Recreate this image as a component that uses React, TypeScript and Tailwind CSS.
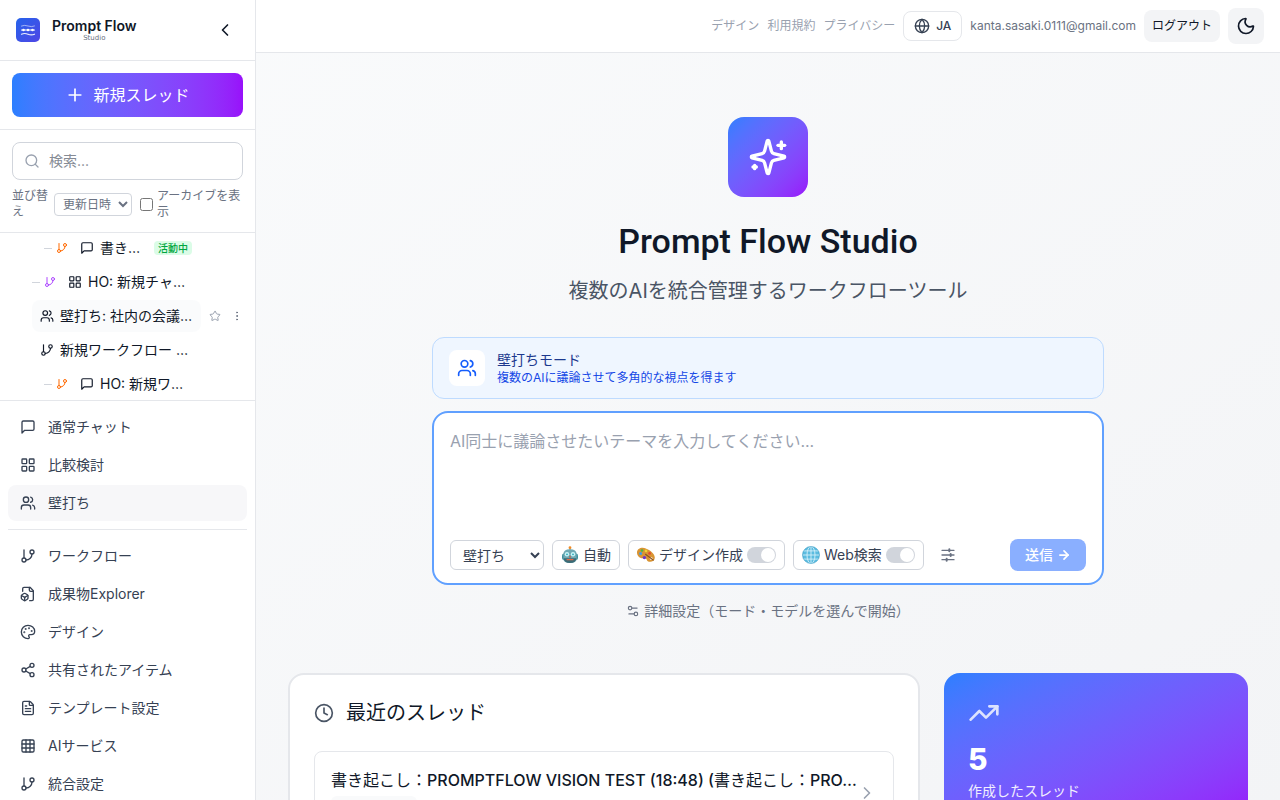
import React from 'react';
import {
  ArrowRight,
  ChevronLeft,
  ChevronRight,
  Clock,
  FileText,
  GitBranch,
  Globe,
  Grid3x3,
  LayoutGrid,
  Moon,
  MoreVertical,
  Palette,
  Plus,
  Search,
  Settings2,
  Share2,
  Star,
  TrendingUp,
  Users,
} from 'lucide-react';

type IconProps = { className?: string };
type IconType = React.ComponentType<IconProps>;

function Stroke({ className, children }: IconProps & { children: React.ReactNode }) {
  return (
    <svg
      viewBox="0 0 24 24"
      fill="none"
      stroke="currentColor"
      strokeWidth="2"
      strokeLinecap="round"
      strokeLinejoin="round"
      className={className}
      aria-hidden="true"
    >
      {children}
    </svg>
  );
}

function ChatIcon({ className }: IconProps) {
  return (
    <Stroke className={className}>
      <path d="M21 15a2 2 0 0 1-2 2H7l-4 4V5a2 2 0 0 1 2-2h14a2 2 0 0 1 2 2z" />
    </Stroke>
  );
}

function SlidersIcon({ className }: IconProps) {
  return (
    <Stroke className={className}>
      <path d="M3 5h18M3 12h18M3 19h18" />
      <path d="M14 3.500v3M16 10.500v3M10 17.500v3" strokeWidth="3" />
    </Stroke>
  );
}

function FileBoxIcon({ className }: IconProps) {
  return (
    <Stroke className={className}>
      <path d="M14.5 22H18a2 2 0 0 0 2-2V7l-5-5H6a2 2 0 0 0-2 2v4" />
      <path d="M14 2v4a2 2 0 0 0 2 2h4" />
      <path d="M3 13.1a2 2 0 0 0-1 1.76v3.24a2 2 0 0 0 .97 1.78L6 21.7a2 2 0 0 0 2.03.01L11 19.9a2 2 0 0 0 1-1.76V14.9a2 2 0 0 0-.97-1.78L8 11.3a2 2 0 0 0-2.03-.01Z" />
      <path d="M7 17v5" />
      <path d="M11.7 14.2 7 17l-4.7-2.8" />
    </Stroke>
  );
}

function SparklesIcon({ className }: IconProps) {
  return (
    <Stroke className={className}>
      <path d="M9.937 15.5A2 2 0 0 0 8.5 14.063l-6.135-1.582a.5.5 0 0 1 0-.962L8.5 9.936A2 2 0 0 0 9.937 8.5l1.582-6.135a.5.5 0 0 1 .963 0L14.063 8.5A2 2 0 0 0 15.5 9.937l6.135 1.581a.5.5 0 0 1 0 .964L15.5 14.063a2 2 0 0 0-1.437 1.437l-1.582 6.135a.5.5 0 0 1-.963 0z" />
      <path d="M20 3v4" />
      <path d="M22 5h-4" />
      <path d="M4 17v2" />
      <path d="M5 18H3" />
    </Stroke>
  );
}

function LogoMark() {
  return (
    <svg viewBox="0 0 24 24" className="size-6 shrink-0" aria-hidden="true">
      <defs>
        <linearGradient id="logo" x1="0" y1="0" x2="1" y2="1">
          <stop offset="0" stopColor="#2563eb" />
          <stop offset="1" stopColor="#4f46e5" />
        </linearGradient>
      </defs>
      <rect width="24" height="24" rx="5" fill="url(#logo)" />
      <g fill="none" stroke="#fff" strokeLinecap="round">
        <path d="M5.500 8q3-1.300 6.500 0t6.500 0" strokeWidth="1" opacity=".55" />
        <path d="M5.500 12h13" strokeWidth="1.200" />
        <path d="M5.500 16.200q3-1.400 6.500 0t6.500 0" strokeWidth="1.200" opacity=".9" />
      </g>
      <g fill="#fff">
        <circle cx="7.500" cy="12" r="1.300" />
        <circle cx="12" cy="12" r="1.300" />
        <circle cx="16.500" cy="12" r="1.300" />
      </g>
    </svg>
  );
}

function RobotEmoji() {
  return (
    <svg viewBox="0 0 18 18" className="size-[18px] shrink-0" aria-hidden="true">
      <path d="M9 2.500v3" stroke="#8a9296" strokeWidth="1.200" />
      <circle cx="9" cy="1.700" r="1.400" fill="#f08a24" />
      <rect x="1" y="7.500" width="16" height="6.500" rx="2" fill="#3f8f9c" />
      <path d="M2.400 8q0-4.800 6.600-4.800t6.600 4.800v5q0 4-6.600 4t-6.600-4z" fill="#6fa9b4" />
      <path d="M2.600 12.200h12.800q-.3 4.800-6.400 4.800t-6.400-4.800z" fill="#3b6b76" />
      <circle cx="6" cy="8.300" r="2.200" fill="#c9f4f7" />
      <circle cx="12" cy="8.300" r="2.200" fill="#c9f4f7" />
      <circle cx="6" cy="8.300" r=".9" fill="#2aa6b8" />
      <circle cx="12" cy="8.300" r=".9" fill="#2aa6b8" />
      <path d="m9 9.500 1 1.900H8z" fill="#d9482b" />
      <path d="M5.600 13.600h6.800" stroke="#e06a4a" strokeWidth="1.300" />
    </svg>
  );
}

function PaletteEmoji() {
  return (
    <svg viewBox="0 0 18 18" className="size-[18px] shrink-0" aria-hidden="true">
      <path
        d="M0 6.500C.2 2.500 4.500.9 8.800 2.400s9 5.200 9 9.300c0 3.500-3.900 4.900-6.700 3.700-1.600-.7-.9-2.400-2.600-3.200-1.800-.8-2.600.6-4.700-.2C1.300 11.100-.1 8.900 0 6.500z"
        fill="#d99432"
      />
      <circle cx="3.600" cy="7.600" r="1.500" fill="#3f9be8" />
      <circle cx="5" cy="4.500" r="1.300" fill="#4bb54a" />
      <circle cx="9" cy="4.900" r="1.300" fill="#f3d330" />
      <circle cx="12.600" cy="7.400" r="1.400" fill="#e24a32" />
      <circle cx="7.400" cy="11.600" r="1.700" fill="#6b35c9" />
      <circle cx="14.200" cy="12.600" r="1.400" fill="#fff" />
      <path d="m8.500 8.300 7.700 5.800" stroke="#8c5320" strokeWidth="1.200" strokeLinecap="round" />
    </svg>
  );
}

function GlobeEmoji() {
  return (
    <svg viewBox="0 0 18 18" className="size-[18px] shrink-0" aria-hidden="true">
      <circle cx="9" cy="9" r="8.500" fill="#5bbce0" />
      <g fill="none" stroke="#dff5fc" strokeWidth=".8">
        <ellipse cx="9" cy="9" rx="4" ry="8.500" />
        <path d="M9 .5v17M.5 9h17M2 4.900h14M2 13.100h14" />
      </g>
      <circle cx="9" cy="9" r="8.500" fill="none" stroke="#3a9cc4" strokeWidth=".6" />
    </svg>
  );
}

const primaryNav: { label: string; icon: IconType; active?: boolean }[] = [
  { label: '通常チャット', icon: ChatIcon },
  { label: '比較検討', icon: LayoutGrid },
  { label: '壁打ち', icon: Users, active: true },
];

const secondaryNav: { label: string; icon: IconType }[] = [
  { label: 'ワークフロー', icon: GitBranch },
  { label: '成果物Explorer', icon: FileBoxIcon },
  { label: 'デザイン', icon: Palette },
  { label: '共有されたアイテム', icon: Share2 },
  { label: 'テンプレート設定', icon: FileText },
  { label: 'AIサービス', icon: Grid3x3 },
  { label: '統合設定', icon: GitBranch },
];

function NavItem({ label, icon: Icon, active }: { label: string; icon: IconType; active?: boolean }) {
  return (
    <a
      href="#"
      className={`flex h-9 shrink-0 items-center gap-3 rounded-lg px-3 text-sm text-gray-700 ${active ? 'bg-gray-100/70' : ''}`}
    >
      <Icon className="size-4 shrink-0" />
      <span>{label}</span>
    </a>
  );
}

function ThreadRow({
  label,
  icon: Icon,
  indent,
  branch,
  badge,
  hovered,
}: {
  label: string;
  icon: IconType;
  indent: string;
  branch?: string;
  badge?: string;
  hovered?: boolean;
}) {
  return (
    <div className={`flex h-8 shrink-0 items-center gap-1 ${indent}`}>
      {branch && (
        <>
          <span className="h-px w-2 shrink-0 bg-gray-300" />
          <GitBranch className={`size-3 shrink-0 ${branch}`} />
        </>
      )}
      <button
        type="button"
        className={`flex h-8 shrink-0 items-center gap-1.5 rounded-lg px-2 text-sm whitespace-nowrap text-gray-900 ${hovered ? 'w-[169px] bg-gray-50/80' : ''}`}
      >
        <Icon className="size-3.5 shrink-0" />
        <span>{label}</span>
        {badge && (
          <span className="ml-2 rounded bg-green-100 px-1 text-[10px] leading-[14px] font-medium text-green-600">
            {badge}
          </span>
        )}
      </button>
      {hovered && (
        <>
          <button type="button" aria-label="お気に入り" className="p-1 text-gray-400">
            <Star className="size-3" />
          </button>
          <button type="button" aria-label="メニュー" className="px-0.5 py-1 text-gray-500">
            <MoreVertical className="size-3" />
          </button>
        </>
      )}
    </div>
  );
}

function Sidebar() {
  return (
    <aside className="flex w-64 shrink-0 flex-col border-r border-gray-200 bg-white">
      <div className="flex h-[61px] shrink-0 items-center gap-3 border-b border-gray-200 pr-5 pl-4">
        <LogoMark />
        <div className="flex flex-col items-center">
          <span className="text-sm leading-4 font-semibold text-gray-900">Prompt Flow</span>
          <span className="font-['DejaVu_Sans',sans-serif] text-[7px] leading-2 text-gray-500">Studio</span>
        </div>
        <button type="button" aria-label="サイドバーを閉じる" className="ml-auto text-gray-900">
          <ChevronLeft className="size-5" />
        </button>
      </div>

      <div className="shrink-0 border-b border-gray-200 p-3">
        <button
          type="button"
          className="flex h-11 w-full items-center justify-center gap-2 rounded-lg bg-linear-to-r from-[#2b7fff] to-[#9810fa] text-white"
        >
          <Plus className="size-5" />
          新規スレッド
        </button>
      </div>

      <div className="shrink-0 border-b border-gray-200 p-3">
        <label className="flex h-[38px] items-center gap-[9px] rounded-lg border border-gray-300 px-[11px]">
          <Search className="size-4 shrink-0 text-gray-400" />
          <input
            type="search"
            aria-label="検索"
            placeholder="検索..."
            className="w-full min-w-0 text-sm outline-none placeholder:text-[#858b95]"
          />
        </label>
        <div className="mt-2 flex items-center gap-2 text-xs text-gray-500">
          <div className="flex items-center gap-1">
            <label htmlFor="sort" className="w-[38px]">
              並び替え
            </label>
            <select id="sort" className="h-[23px] w-[78px] rounded border border-gray-300 bg-white px-1">
              <option>更新日時</option>
            </select>
          </div>
          <label className="flex min-w-0 flex-1 items-center gap-1">
            <input type="checkbox" className="size-[13px] shrink-0" />
            <span>アーカイブを表示</span>
          </label>
        </div>
      </div>

      <div className="flex min-h-0 flex-1 flex-col justify-end gap-0.5 overflow-hidden">
        <ThreadRow label="書き…" icon={ChatIcon} indent="pl-11" branch="text-orange-500" badge="活動中" />
        <ThreadRow label="HO: 新規チャ…" icon={LayoutGrid} indent="pl-8" branch="text-purple-500" />
        <ThreadRow label="壁打ち: 社内の会議…" icon={Users} indent="pl-8" hovered />
        <ThreadRow label="新規ワークフロー …" icon={GitBranch} indent="pl-8" />
        <ThreadRow label="HO: 新規ワ…" icon={ChatIcon} indent="pl-11" branch="text-orange-500" />
      </div>

      <nav className="flex h-1/2 shrink-0 flex-col gap-0.5 overflow-y-auto border-t border-gray-200 p-2 [scrollbar-width:none]">
        {primaryNav.map((item) => (
          <NavItem key={item.label} {...item} />
        ))}
        <hr className="my-1.5 shrink-0 border-gray-200" />
        {secondaryNav.map((item) => (
          <NavItem key={item.label} {...item} />
        ))}
      </nav>
    </aside>
  );
}

function TopBar() {
  return (
    <header className="flex shrink-0 items-center justify-end gap-2 border-b border-gray-200 bg-white px-4 py-2 text-xs">
      <a href="#" className="text-gray-400">デザイン</a>
      <a href="#" className="text-gray-400">利用規約</a>
      <a href="#" className="text-gray-400">プライバシー</a>
      <button
        type="button"
        className="flex h-[30px] items-center gap-1.5 rounded-lg border border-gray-200 px-2.5 font-medium text-gray-700"
      >
        <Globe className="size-4" />
        JA
      </button>
      <span className="text-gray-500">kanta.sasaki.0111@gmail.com</span>
      <button type="button" className="h-8 rounded-lg bg-gray-100 px-2 text-gray-900">
        ログアウト
      </button>
      <button
        type="button"
        aria-label="ダークモード"
        className="flex size-9 items-center justify-center rounded-lg bg-gray-100 text-gray-900"
      >
        <Moon className="size-5" />
      </button>
    </header>
  );
}

function ToggleChip({ label, emoji }: { label: string; emoji: React.ReactNode }) {
  return (
    <label className="flex h-[30px] items-center gap-1 rounded-md border border-gray-300 px-2 text-sm whitespace-nowrap text-gray-700">
      {emoji}
      <span>{label}</span>
      <input type="checkbox" className="peer sr-only" />
      <span className="flex h-4 w-[29px] items-center justify-end rounded-full bg-gray-300 pr-px">
        <span className="size-3.5 rounded-full bg-white" />
      </span>
    </label>
  );
}

function Composer() {
  return (
    <div className="mx-auto w-full max-w-2xl">
      <div className="mb-3 flex items-center gap-3 rounded-xl border border-blue-200 bg-blue-50 px-4 py-3">
        <div className="flex size-9 shrink-0 items-center justify-center rounded-lg bg-white text-blue-600">
          <Users className="size-5" />
        </div>
        <div className="flex flex-col">
          <span className="text-sm leading-5 text-blue-900">壁打ちモード</span>
          <span className="text-xs leading-4 text-blue-700">複数のAIに議論させて多角的な視点を得ます</span>
        </div>
      </div>

      <div className="rounded-2xl border-2 border-[#60a0ff] bg-white">
        <textarea
          aria-label="テーマ"
          placeholder="AI同士に議論させたいテーマを入力してください..."
          className="block h-[126px] w-full resize-none px-4 pt-4 text-base outline-none placeholder:text-gray-400"
        />
        <div className="flex items-center gap-2 px-4 pb-3">
          <select
            aria-label="モード"
            className="h-[30px] w-[94px] rounded-md border border-gray-300 bg-white px-2 text-sm text-gray-700"
          >
            <option>壁打ち</option>
          </select>
          <button
            type="button"
            className="flex h-[30px] items-center gap-1 rounded-md border border-gray-300 px-2 text-sm text-gray-700"
          >
            <RobotEmoji />
            自動
          </button>
          <ToggleChip label="デザイン作成" emoji={<PaletteEmoji />} />
          <ToggleChip label="Web検索" emoji={<GlobeEmoji />} />
          <button type="button" aria-label="オプション" className="p-2 text-gray-500">
            <SlidersIcon className="size-4" />
          </button>
          <button
            type="button"
            className="ml-auto flex h-8 w-[76px] items-center justify-center gap-1 rounded-lg bg-[#8aafff] text-sm font-medium text-white"
          >
            送信
            <ArrowRight className="size-3.5" strokeWidth={3} />
          </button>
        </div>
      </div>

      <div className="mt-4 flex justify-center">
        <button type="button" className="flex items-center gap-1 text-sm text-gray-500">
          <Settings2 className="size-3.5" />
          詳細設定（モード・モデルを選んで開始）
        </button>
      </div>
    </div>
  );
}

function Dashboard() {
  return (
    <div className="mt-[52px] grid grid-cols-3 items-start gap-6">
      <section className="col-span-2 rounded-2xl border-2 border-gray-200 bg-white p-6">
        <div className="mb-6 flex items-center gap-3">
          <Clock className="size-5 text-gray-600" />
          <h2 className="text-xl text-gray-900">最近のスレッド</h2>
        </div>
        <a href="#" className="flex items-center rounded-lg border border-gray-200 p-4">
          <div className="min-w-0 flex-1">
            <p className="mb-1 truncate text-gray-900">
              書き起こし：<span className="font-medium">PROMPTFLOW VISION TEST (18:48) (</span>書き起こし：
              <span className="font-medium">PRO…</span>
            </p>
            <div className="h-[22px] w-[86px] rounded-md bg-gray-50" />
          </div>
          <ChevronRight className="size-5 shrink-0 text-gray-400" />
        </a>
      </section>
      <section className="rounded-2xl bg-linear-to-br from-[#2b7fff] to-[#9810fa] p-6 text-white">
        <TrendingUp className="mb-3 size-8 opacity-80" />
        <p className="mb-1 text-3xl font-extrabold">5</p>
        <p className="text-sm opacity-90">作成したスレッド</p>
      </section>
    </div>
  );
}

export default function App() {
  return (
    <div className="flex h-screen overflow-hidden font-['Inter','Noto_Sans_CJK_JP',sans-serif] text-gray-900">
      <Sidebar />
      <div className="flex min-w-0 flex-1 flex-col">
        <TopBar />
        <main className="min-h-0 flex-1 overflow-y-auto bg-linear-to-br from-gray-50 to-gray-100 px-8 pt-16 [scrollbar-width:none]">
          <div className="flex flex-col items-center text-center">
            <div className="mb-6 flex size-20 items-center justify-center rounded-2xl bg-linear-to-br from-[#2b7fff] to-[#9810fa] text-white">
              <SparklesIcon className="size-10" />
            </div>
            <h1 className="mb-4 font-['Roboto',sans-serif] text-[34px] leading-10 font-medium">Prompt Flow Studio</h1>
            <p className="mb-8 text-xl text-gray-600">複数のAIを統合管理するワークフローツール</p>
          </div>
          <Composer />
          <Dashboard />
        </main>
      </div>
    </div>
  );
}
